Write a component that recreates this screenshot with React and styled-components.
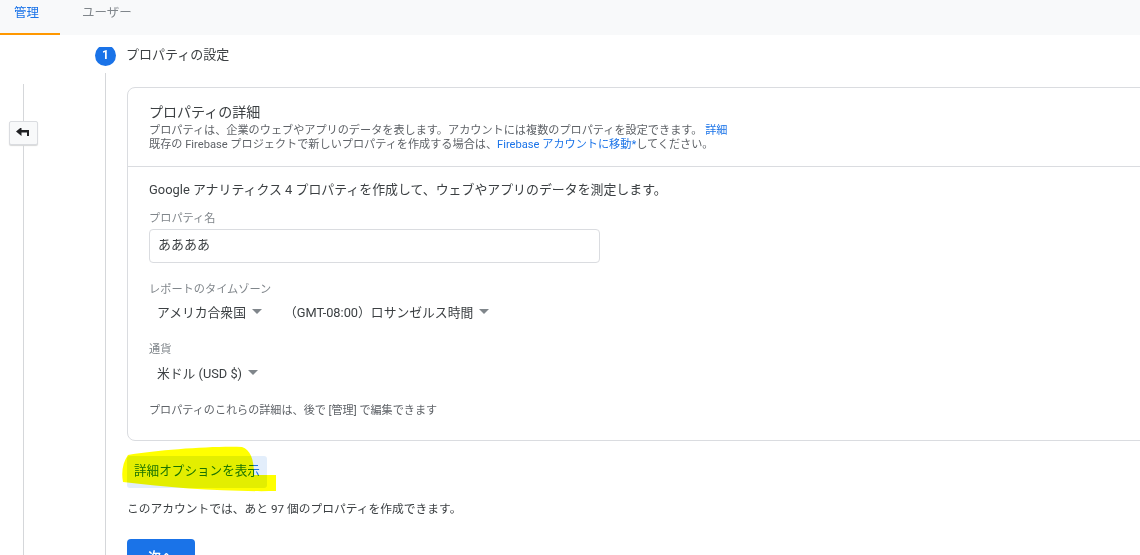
import styled, { createGlobalStyle } from "styled-components";

const GlobalStyle = createGlobalStyle`
  html, body {
    margin: 0;
    padding: 0;
    background: #fff;
    overflow: hidden;
  }
  body {
    font-family: Roboto, "Noto Sans CJK JP", sans-serif;
    color: #3c4043;
  }
`;

const Page = styled.div`
  position: relative;
  width: 1140px;
  height: 555px;
  overflow: hidden;
`;

const Tabs = styled.div`
  display: flex;
  height: 35px;
  background: #f8f9fa;
`;

const Tab = styled.div`
  width: ${({ $wide }) => ($wide ? "105px" : "60px")};
  box-sizing: border-box;
  padding-top: 4px;
  padding-left: ${({ $wide }) => ($wide ? "22px" : "14px")};
  font-size: 12.5px;
  line-height: 18px;
  color: ${({ $active }) => ($active ? "#1a73e8" : "#80868b")};
  border-bottom: 2px solid ${({ $active }) => ($active ? "#ff9800" : "transparent")};
`;

const Body = styled.div`
  display: flex;
  height: 508px;
  margin-top: 12px;
  overflow: hidden;
`;

const Rail = styled.div`
  width: 46px;
  padding-top: 37px;
  display: flex;
  flex-direction: column;
  align-items: center;
  flex-shrink: 0;
`;

const RailLine = styled.div`
  width: 1px;
  height: ${({ $grow }) => ($grow ? "auto" : "37px")};
  flex: ${({ $grow }) => ($grow ? 1 : "none")};
  background: #d5d7da;
`;

const BackButton = styled.button`
  width: 29px;
  height: 24px;
  padding: 0;
  display: flex;
  align-items: center;
  justify-content: center;
  background: #f8f9fa;
  border: 1px solid #dadce0;
  border-radius: 2px;
  box-shadow: 0 1px 1px rgba(60, 64, 67, 0.2);
`;

const Stepper = styled.div`
  margin-left: 49px;
  flex: 1;
  min-width: 0;
`;

const StepHead = styled.div`
  display: flex;
  align-items: center;
  gap: 10px;
  height: 19px;
  width: 140px;
  margin-bottom: 7px;
`;

const StepBadge = styled.div`
  width: 21px;
  height: 21px;
  margin-top: -2px;
  flex-shrink: 0;
  border-radius: 50%;
  background: #1a73e8;
  color: #fff;
  font-size: 12px;
  font-weight: 700;
  line-height: 21px;
  text-align: center;
`;

const StepTitle = styled.div`
  font-size: 13px;
  line-height: 19px;
  margin-top: -4px;
  white-space: nowrap;
`;

const StepBody = styled.div`
  margin-left: 10px;
  padding: 14px 0 0 21px;
  border-left: 1px solid #d5d7da;
  height: 470px;
`;

const Card = styled.div`
  width: 1100px;
  height: 352px;
  border: 1px solid #dadce0;
  border-radius: 8px;
`;

const CardHead = styled.div`
  height: 79px;
  box-sizing: border-box;
  padding: 14px 21px 0;
  border-bottom: 1px solid #dadce0;
`;

const CardTitle = styled.div`
  font-size: 14px;
  line-height: 20px;
  margin-bottom: 2px;
  color: #3c4043;
`;

const Hint = styled.div`
  font-size: 11.15px;
  line-height: 14px;
  color: #5f6368;
  white-space: nowrap;
`;

const Link = styled.a`
  color: #1a73e8;
`;

const CardBody = styled.div`
  padding: 13px 21px 0;
`;

const Lead = styled.div`
  font-size: 12.92px;
  line-height: 20px;
  margin-bottom: 11px;
  color: #3c4043;
`;

const FieldLabel = styled.div`
  font-size: 11.2px;
  line-height: 16px;
  color: #80868b;
`;

const TextField = styled.div`
  width: 451px;
  height: 34px;
  margin: 2px 0 19px;
  padding: 0 8px;
  box-sizing: border-box;
  border: 1px solid #dadce0;
  border-radius: 4px;
  font-size: 13px;
  line-height: 30px;
  color: #3c4043;
`;

const SelectRow = styled.div`
  display: flex;
  gap: 22px;
  height: 30px;
  padding-left: 8px;
  margin-top: ${({ $top }) => $top}px;
  margin-bottom: ${({ $gap }) => $gap}px;
`;

const Select = styled.div`
  display: flex;
  align-items: center;
  gap: 6px;
  font-size: 12.8px;
  color: #3c4043;
  white-space: nowrap;
`;

const Caret = styled.span`
  width: 0;
  height: 0;
  border-left: 5px solid transparent;
  border-right: 5px solid transparent;
  border-top: 5px solid #80868b;
`;

const Note = styled.div`
  font-size: 11.1px;
  line-height: 16px;
  color: #5f6368;
`;

const AdvancedButton = styled.div`
  display: inline-block;
  margin-top: 15px;
  padding: 0 7px;
  height: 32px;
  line-height: 30px;
  font-size: 12.6px;
  color: #1a73e8;
  background: #e3eefb;
  border-radius: 3px;
`;

const Remaining = styled.div`
  margin-top: 11px;
  font-size: 11.75px;
  line-height: 20px;
  color: #3c4043;
`;

const NextButton = styled.button`
  display: block;
  width: 68px;
  height: 32px;
  margin-top: 20px;
  border: none;
  border-radius: 4px;
  background: #1a73e8;
  color: #fff;
  font-family: inherit;
  font-size: 13px;
  font-weight: 500;
`;

const Highlight = styled.svg`
  position: absolute;
  left: 120px;
  top: 444px;
  mix-blend-mode: multiply;
  pointer-events: none;
`;

const App = () => {
  return (
    <Page>
      <GlobalStyle />
      <Tabs>
        <Tab $active>管理</Tab>
        <Tab $wide>ユーザー</Tab>
      </Tabs>
      <Body>
        <Rail>
          <RailLine />
          <BackButton aria-label="戻る">
            <svg width="14" height="10" viewBox="0 1 14 10">
              <path d="M0 4.5 L5.5 0 V3 H13 V9 H11 V5.6 H5.5 V9 Z" fill="#202124" />
            </svg>
          </BackButton>
          <RailLine $grow />
        </Rail>
        <Stepper>
          <StepHead>
            <StepBadge>1</StepBadge>
            <StepTitle>プロパティの設定</StepTitle>
          </StepHead>
          <StepBody>
            <Card>
              <CardHead>
                <CardTitle>プロパティの詳細</CardTitle>
                <Hint>
                  プロパティは、企業のウェブやアプリのデータを表します。アカウントには複数のプロパティを設定できます。 <Link>詳細</Link>
                </Hint>
                <Hint>
                  既存の Firebase プロジェクトで新しいプロパティを作成する場合は、<Link>Firebase アカウントに移動*</Link>してください。
                </Hint>
              </CardHead>
              <CardBody>
                <Lead>Google アナリティクス 4 プロパティを作成して、ウェブやアプリのデータを測定します。</Lead>
                <FieldLabel>プロパティ名</FieldLabel>
                <TextField>ああああ</TextField>
                <FieldLabel>レポートのタイムゾーン</FieldLabel>
                <SelectRow $top={-2} $gap={16}>
                  <Select>アメリカ合衆国 <Caret /></Select>
                  <Select>（GMT-08:00）ロサンゼルス時間 <Caret /></Select>
                </SelectRow>
                <FieldLabel>通貨</FieldLabel>
                <SelectRow $top={-1} $gap={16}>
                  <Select>米ドル (USD $) <Caret /></Select>
                </SelectRow>
                <Note>プロパティのこれらの詳細は、後で [管理] で編集できます</Note>
              </CardBody>
            </Card>
            <AdvancedButton>詳細オプションを表示</AdvancedButton>
            <Remaining>このアカウントでは、あと 97 個のプロパティを作成できます。</Remaining>
            <NextButton>次へ</NextButton>
          </StepBody>
        </Stepper>
      </Body>
      <Highlight width="160" height="52" viewBox="0 0 160 52">
        <path
          d="M8 11 C40 6 90 2 122 3 C130 6 134 14 134 31 L156 31 L156 47 C110 48 50 44 3 38 C1 28 3 18 8 11 Z"
          fill="#ffff00"
        />
      </Highlight>
    </Page>
  );
};

export default App;
